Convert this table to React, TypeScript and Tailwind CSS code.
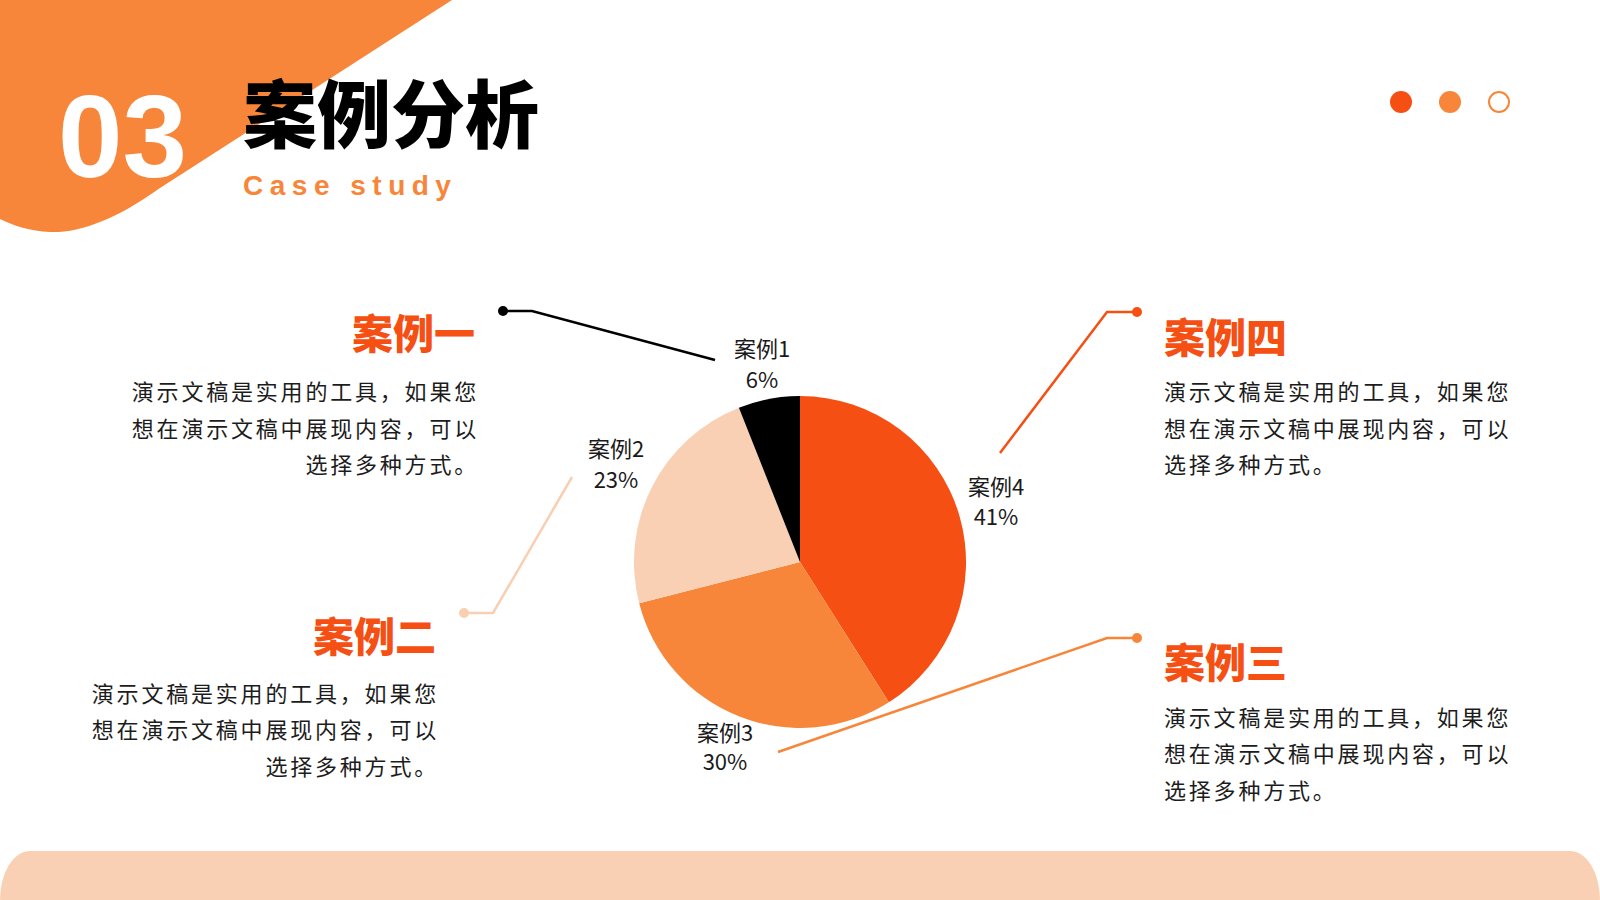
const Body = ({ lines, right }: { lines: string[]; right?: boolean }) => (
  <div className={`text-[22px] leading-[36.5px] tracking-[2.8px] text-[#1c1c1c] ${right ? 'text-right' : 'text-left'}`}>
    {lines.map((l) => (
      <p key={l}>{l}</p>
    ))}
  </div>
);

const copy = ['演示文稿是实用的工具，如果您', '想在演示文稿中展现内容，可以', '选择多种方式。'];

const Title = ({ children, className = '' }: { children: string; className?: string }) => (
  <h3 className={`text-[41px] leading-none font-black text-[#f54f14] ${className}`}>{children}</h3>
);

// pie: center (800,562), r 166, start at 12 o'clock, clockwise
const PieChart = () => (
  <svg className="w-[684px] h-[561px] shrink-0 overflow-visible" viewBox="480 290 684 561">
    <path d="M800 562 L800 396 A166 166 0 0 1 888.9 702.2 Z" fill="#f54f14" />
    <path d="M800 562 L888.9 702.2 A166 166 0 0 1 639.2 603.3 Z" fill="#f7863a" />
    <path d="M800 562 L639.2 603.3 A166 166 0 0 1 738.9 407.7 Z" fill="#f9d0b4" />
    <path d="M800 562 L738.9 407.7 A166 166 0 0 1 800 396 Z" fill="#000" />

    <polyline points="503,311 532,311 715,360" fill="none" stroke="#000" strokeWidth="2.5" />
    <circle cx="503" cy="311" r="5" fill="#000" />
    <polyline points="464,613 493,613 572,477" fill="none" stroke="#f9cfb2" strokeWidth="2.5" />
    <circle cx="464" cy="613" r="5" fill="#f9cfb2" />
    <polyline points="1137,312 1107,312 1000,453" fill="none" stroke="#f54f14" strokeWidth="2.5" />
    <circle cx="1137" cy="312" r="5" fill="#f54f14" />
    <polyline points="1137,638 1107,638 778,752" fill="none" stroke="#f7863a" strokeWidth="2.5" />
    <circle cx="1137" cy="638" r="5" fill="#f7863a" />

    <g fontSize="22" fill="#1a1a1a" textAnchor="middle">
      <text x="762" y="357">案例1</text>
      <text x="762" y="388">6%</text>
      <text x="616" y="457">案例2</text>
      <text x="616" y="488">23%</text>
      <text x="996" y="495">案例4</text>
      <text x="996" y="525">41%</text>
      <text x="725" y="741">案例3</text>
      <text x="725" y="770">30%</text>
    </g>
  </svg>
);

export default function App() {
  return (
    <div className="w-[1600px] h-[900px] overflow-hidden bg-white font-['Noto_Sans_CJK_SC','Noto_Sans',sans-serif]">
      <header className="relative h-[290px]">
        <svg className="absolute left-0 top-0 w-[460px] h-[240px]" viewBox="0 0 460 240">
          <path d="M0 0 L452 0 L160 188 C115 220 80 233 50 232 C30 231 14 226 0 219 Z" fill="#f7863a" />
        </svg>
        <div className="relative flex items-start pl-[58px] pt-[79px]">
          <span className="text-[116px] leading-none font-bold text-white font-['Liberation_Sans',Arial,sans-serif]">03</span>
          <div className="ml-[56px] -mt-[6px]">
            <h1 className="text-[74px] leading-none font-black text-black">案例分析</h1>
            <p className="mt-[25px] text-[28px] leading-none font-bold tracking-[6.5px] text-[#f7863a] font-['Liberation_Sans',Arial,sans-serif]">
              Case study
            </p>
          </div>
          <div className="ml-auto mr-[90px] mt-[12px] flex gap-[27px]">
            <span className="w-[22px] h-[22px] rounded-full bg-[#f54f14]" />
            <span className="w-[22px] h-[22px] rounded-full bg-[#f7863a]" />
            <span className="w-[22px] h-[22px] rounded-full border-2 border-[#f7863a]" />
          </div>
        </div>
      </header>

      <main className="flex h-[561px]">
        <div className="w-[480px] shrink-0 pt-[21px] flex flex-col items-end">
          <div className="flex flex-col items-end mr-[1px]">
            <Title className="mr-[4px]">案例一</Title>
            <div className="mt-[20px]">
              <Body lines={copy} right />
            </div>
          </div>
          <div className="flex flex-col items-end mr-[41px] mt-[132px]">
            <Title className="mr-[3px]">案例二</Title>
            <div className="mt-[19px]">
              <Body lines={copy} right />
            </div>
          </div>
        </div>

        <PieChart />

        <div className="flex-1 pt-[25px]">
          <Title>案例四</Title>
          <div className="mt-[16px]">
            <Body lines={copy} />
          </div>
          <Title className="mt-[158px]">案例三</Title>
          <div className="mt-[17px]">
            <Body lines={copy} />
          </div>
        </div>
      </main>

      <div className="h-[49px] bg-[#f9d0b4] rounded-t-[30px_49px]" />
    </div>
  );
}
